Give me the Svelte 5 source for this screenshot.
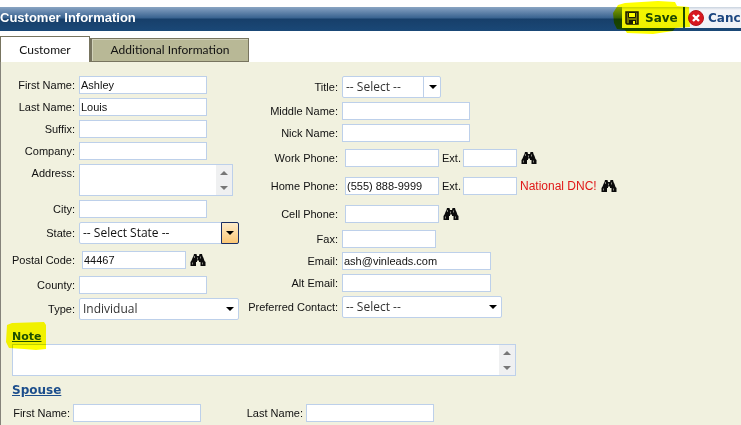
<script>
  let tab = $state('customer');

  const left = [
    { id: 'first', label: 'First Name:', value: 'Ashley' },
    { id: 'last', label: 'Last Name:', value: 'Louis' },
    { id: 'suffix', label: 'Suffix:' },
    { id: 'company', label: 'Company:' },
    { id: 'address', label: 'Address:', kind: 'area' },
    { id: 'city', label: 'City:' },
    { id: 'state', label: 'State:', kind: 'select', value: '-- Select State --', look: 'active' },
    { id: 'postal', label: 'Postal Code:', kind: 'lookup', value: '44467', size: 'postal' },
    { id: 'county', label: 'County:' },
    { id: 'type', label: 'Type:', kind: 'select', value: 'Individual', look: 'soft' }
  ];

  const right = [
    { id: 'title', label: 'Title:', kind: 'select', value: '-- Select --', look: 'brief' },
    { id: 'middle', label: 'Middle Name:' },
    { id: 'nick', label: 'Nick Name:' },
    { id: 'work', label: 'Work Phone:', kind: 'lookup', size: 'phone', ext: true },
    { id: 'home', label: 'Home Phone:', kind: 'lookup', value: '(555) 888-9999', size: 'phone', ext: true, warn: 'National DNC!' },
    { id: 'cell', label: 'Cell Phone:', kind: 'lookup', size: 'phone' },
    { id: 'fax', label: 'Fax:', size: 'phone' },
    { id: 'email', label: 'Email:', value: 'ash@vinleads.com', size: 'mail' },
    { id: 'alt', label: 'Alt Email:', size: 'mail' },
    { id: 'contact', label: 'Preferred Contact:', kind: 'select', value: '-- Select --', look: 'soft' }
  ];
</script>

{#snippet binoculars()}
  <button type="button" class="find" aria-label="Look up">
    <svg width="16" height="14" viewBox="0 0 16 14" aria-hidden="true">
      <path d="M4 1h2.500l.5 2h2l.5-2H12l.5 2 1 2 1 3 1 1v4h-5V9H9V7.500H7V9H6v4H0.500V9l1-1.500 1-2.500 1-2z" fill="#0b0b0b" />
      <path d="M4.500 3v2M2.500 9.500v2M10.500 3.500v2M7.500 4.500v2M12.500 9.500v2" stroke="#85857c" fill="none" />
    </svg>
  </button>
{/snippet}

{#snippet area(id, label)}
  <div class="area">
    <textarea {id} aria-label={label}></textarea>
    <span class="scroll" aria-hidden="true">
      <svg width="8" height="4" viewBox="0 0 8 4"><path d="M0 4h8L4 0z" fill="#777" /></svg>
      <svg width="8" height="4" viewBox="0 0 8 4"><path d="M0 0h8L4 4z" fill="#777" /></svg>
    </span>
  </div>
{/snippet}

{#snippet row(f)}
  <div class="row" class:tall={f.kind === 'lookup'}>
    <label for={f.id}>{f.label}</label>
    {#if f.kind === 'area'}
      {@render area(f.id)}
    {:else if f.kind === 'select'}
      <div class="pick {f.look}">
        <select id={f.id}><option>{f.value}</option></select>
        <span class="arrow" aria-hidden="true">
          <svg width="8" height="4" viewBox="0 0 8 4"><path d="M0 0h8L4 4z" fill="#000" /></svg>
        </span>
      </div>
    {:else if f.kind === 'lookup'}
      <div class="lookup">
        <input id={f.id} type="text" class={f.size} value={f.value ?? ''} />
        {#if f.ext}
          <label class="ext" for="{f.id}-ext">Ext.</label>
          <input id="{f.id}-ext" type="text" class="short" />
        {/if}
        {#if f.warn}<span class="warn">{f.warn}</span>{/if}
        {@render binoculars()}
      </div>
    {:else}
      <input id={f.id} type="text" class={f.size} value={f.value ?? ''} />
    {/if}
  </div>
{/snippet}

<div class="page">
  <header>
    <h1>Customer Information</h1>
    <div class="tools">
      <button type="button" class="save">
        <svg width="14" height="14" viewBox="0 0 14 14" aria-hidden="true">
          <path d="M1 1h12v12H2l-1-1z" fill="#77776a" stroke="#1a1a1a" stroke-width="1.500" />
          <path d="M3.500 1.500h7v5h-7z" fill="#fff" stroke="#1a1a1a" />
          <path d="M4 9h7v4H4z" fill="#1a1a1a" />
          <path d="M8 10h2v3H8z" fill="#fff" />
        </svg>
        Save
      </button>
      <button type="button" class="cancel">
        <svg width="16" height="16" viewBox="0 0 16 16" aria-hidden="true">
          <circle cx="8" cy="8" r="7.500" fill="#d8171f" stroke="#b5161c" />
          <path d="M5 5l6 6M11 5l-6 6" stroke="#fff" stroke-width="2.400" />
        </svg>
        Cancel
      </button>
      <svg class="marker" width="78" height="34" viewBox="0 0 78 34" aria-hidden="true">
        <path d="M5 4 12 2 45 0 62 1 64 5 76 6 77 26 62 27 60 30 40 33 14 32 12 29 4 28 1 22 0 12z" fill="#ff0" />
      </svg>
    </div>
  </header>

  <nav role="tablist">
    <button type="button" role="tab" class="one" aria-selected={tab === 'customer'} onclick={() => (tab = 'customer')}>Customer</button>
    <button type="button" role="tab" class="two" aria-selected={tab === 'more'} onclick={() => (tab = 'more')}>Additional Information</button>
  </nav>

  <main>
    <div class="columns">
      <div class="col left">{#each left as f (f.id)}{@render row(f)}{/each}</div>
      <div class="col right">{#each right as f (f.id)}{@render row(f)}{/each}</div>
    </div>

    <section class="note">
      <h2><a href="#note">Note</a>
        <svg class="marker" width="40" height="28" viewBox="0 0 40 28" aria-hidden="true">
          <path d="M1 3 6 1 38 0 40 3 40 27 30 28 18 27 3 26 0 20z" fill="#ff0" />
        </svg>
      </h2>
      {@render area('note', 'Note')}
    </section>

    <section class="spouse">
      <h2><a href="#spouse">Spouse</a></h2>
      <div class="names">
        <div class="row"><label for="sp-first">First Name:</label><input id="sp-first" type="text" /></div>
        <div class="row"><label for="sp-last">Last Name:</label><input id="sp-last" type="text" /></div>
      </div>
    </section>
  </main>
</div>

<style>
  :global(body) { margin: 0; background: #fff; overflow: hidden; }
  .page { padding-top: 7px; min-height: 100vh; box-sizing: border-box; display: flex; flex-direction: column; font: 11px/18px "Liberation Sans", Arial, sans-serif; color: #111; }
  .page * { box-sizing: border-box; }
  button { font: inherit; color: inherit; border: 0; padding: 0; background: none; cursor: pointer; }
  svg { display: block; flex: none; }

  header { height: 24px; display: flex; justify-content: space-between; background: linear-gradient(#8aa5c2 0, #7291b5 3px, #38628f 11px, #173f6a 12px, #1a4877 100%); }
  h1 { margin: 0; font-size: 13px; line-height: 21px; color: #fff; white-space: nowrap; }
  .tools { position: relative; width: 119px; height: 21px; display: flex; background: linear-gradient(#c8d2de, #f4f5f9 3px, #eff1f6); }
  .tools button { display: flex; align-items: center; flex: none; font: bold 12px/20px "DejaVu Sans", Verdana, sans-serif; color: #1c4680; }
  .tools .save { width: 63px; padding-left: 3px; gap: 6px; border-right: 2px solid #1c4a78; }
  .tools .cancel { padding-left: 3px; gap: 4px; }
  .marker { position: absolute; mix-blend-mode: multiply; pointer-events: none; }
  .tools .marker { left: -9px; top: -6px; }

  nav { display: flex; align-items: flex-end; height: 31px; }
  nav button { border: 1px solid #77745f; font: 12px/24px "Lato", "Segoe UI", sans-serif; white-space: nowrap; }
  .one { width: 90px; height: 26px; border-bottom: 0; background: #fff; }
  .two { width: 159px; height: 24px; line-height: 22px; border-left-width: 2px; background: #b8b896; box-shadow: inset 1px 1px #d2d2ba; }

  main { flex: 1; background: #f1f1df; border-left: 1px solid #85837a; padding-top: 14px; }
  .columns { display: flex; }
  .col { display: flex; flex-direction: column; gap: 4px; }
  .left { width: 238px; }
  .row { display: flex; gap: 4px; align-items: flex-start; }
  .row > label { flex: none; text-align: right; white-space: nowrap; }
  .left .row > label { width: 74px; }
  .right .row > label { width: 99px; }
  .row:has(.pick) { align-items: center; }
  .tall { height: 24px; align-items: center; }

  input, textarea, select { font: inherit; color: #111; background: #fff; border: 1px solid #bdd0ea; border-radius: 0; margin: 0; outline: 0; }
  input { width: 128px; height: 18px; padding: 0 1px; }
  .phone { width: 94px; }
  .mail { width: 149px; }
  .postal { width: 104px; }
  .short { width: 54px; }
  .lookup { display: flex; align-items: center; gap: 3px; padding-left: 3px; }
  .warn { color: #e01818; font-size: 12px; white-space: nowrap; }
  .ext { width: 18px; white-space: nowrap; }
  .find { padding-left: 1px; }

  .area { display: flex; width: 154px; height: 32px; border: 1px solid #bdd0ea; background: #fff; }
  .area textarea { flex: 1; min-width: 0; border: 0; resize: none; padding: 1px; overflow: hidden; }
  .scroll { width: 16px; background: #eff0f1; display: flex; flex-direction: column; justify-content: space-between; align-items: center; padding: 6px 0 5px; }

  .pick { position: relative; width: 160px; height: 22px; }
  .pick select { display: block; appearance: none; width: 100%; height: 22px; padding: 0 20px 0 3px; border-radius: 2px; font: 12px/20px "Open Sans", "Segoe UI", sans-serif; }
  .pick.soft select, .pick.brief select { color: #333; }
  .pick.brief { width: 99px; }
  .arrow { position: absolute; top: 0; right: 0; width: 18px; height: 22px; display: flex; align-items: center; justify-content: center; pointer-events: none; }
  .brief .arrow { border-left: 1px solid #bdd0ea; }
  .active .arrow { border: 1px solid #1b2f63; border-radius: 0 2px 2px 0; background: linear-gradient(#fdeccb, #fbc776); }

  h2 { position: relative; margin: 0; font: bold 11px/16px "DejaVu Sans", Verdana, sans-serif; }
  h2 a { color: #1c4e8c; }
  .note { padding: 8px 0 0 11px; }
  .note h2 { line-height: 16px; padding-top: 1px; height: 16px; }
  .note .area { width: 504px; max-width: 100%; }
  .note .marker { left: -6px; top: -6px; z-index: 1; }
  .spouse { padding: 6px 0 3px 11px; }
  .spouse h2 { font-size: 12px; }
  .names { display: flex; gap: 44px; padding-top: 6px; }
  .names label { width: 58px; }
  .names .row { gap: 3px; }
</style>
